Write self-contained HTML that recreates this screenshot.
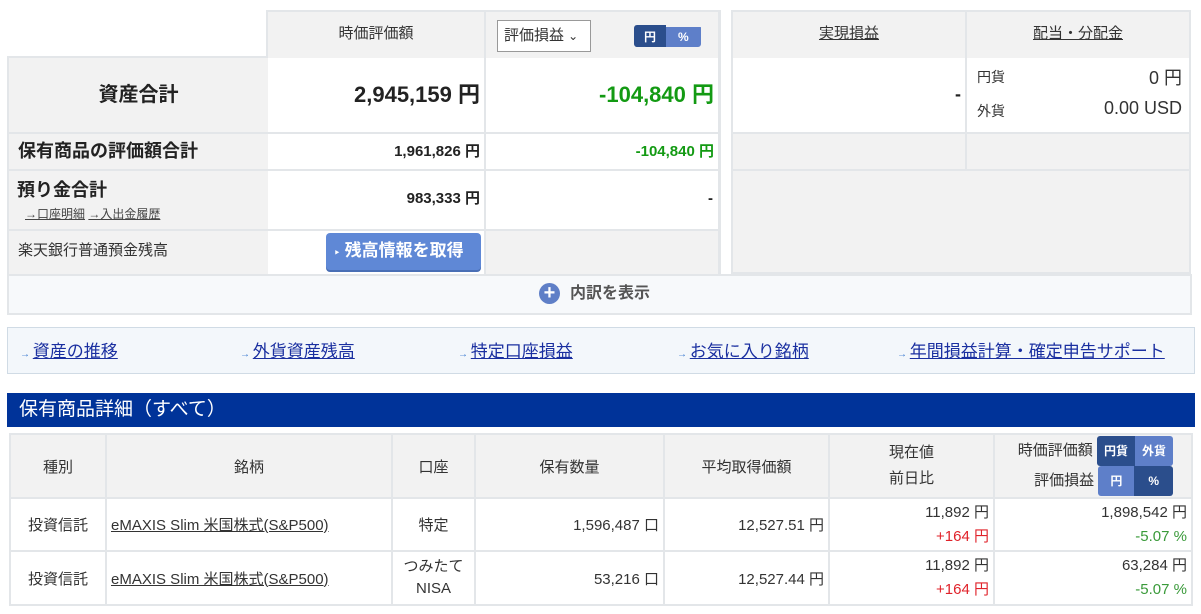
<!DOCTYPE html>
<html><head><meta charset="utf-8"><style>
*{box-sizing:border-box;margin:0;padding:0}
body{width:1201px;height:614px;background:#fff;font-family:"Liberation Sans","Noto Sans CJK JP",sans-serif;color:#333;position:relative;overflow:hidden;font-size:15px}
.a{position:absolute}
.g{background:#f2f2f2}
.w{background:#fff}
.b{font-weight:bold}
.r{text-align:right}
.c{text-align:center}
.grn{color:#139a13}
.red{color:#e0222a}
.pg{color:#3a9a3a}
u{text-decoration:underline}
table{border-collapse:collapse;position:absolute;left:9px;top:433px;width:1184px}
td{border:2px solid #e3e6e9;font-size:15px;padding:0 4px;color:#333}
th{border:2px solid #e3e6e9;background:#f2f2f2;font-weight:normal;font-size:15px;color:#333}
.tg{display:inline-block;font-size:12px;font-weight:bold;color:#fff;border-radius:3px;overflow:hidden;vertical-align:middle}
.tg span{display:inline-block;padding:2px 7px}
</style></head><body>
<div class="a" style="left:266px;top:10px;width:455px;height:264px;background:#e3e6e9"></div>
<div class="a" style="left:7px;top:56px;width:261px;height:218px;background:#e3e6e9"></div>
<div class="a" style="left:731px;top:10px;width:460px;height:264px;background:#e3e6e9"></div>
<div class="a g" style="left:268px;top:12px;width:216px;height:46px;line-height:44px;text-align:center">時価評価額</div>
<div class="a g" style="left:486px;top:12px;width:232px;height:46px"></div>
<div class="a" style="left:497px;top:20px;width:94px;height:32px;border:1px solid #999;background:#fff;line-height:30px;padding-left:6px">評価損益 <span style="font-size:12px">&#8964;</span></div>
<div class="a tg" style="left:634px;top:25px;height:22px"><span style="background:#2b4e8c;padding:3px 10px">円</span><span style="background:#5e7fc9;padding:3px 12px">%</span></div>
<div class="a g b" style="left:9px;top:58px;width:259px;height:74px;line-height:74px;text-align:center;font-size:20px;color:#222">資産合計</div>
<div class="a w b r" style="left:268px;top:58px;width:216px;height:74px;line-height:74px;padding-right:4px;font-size:22px;color:#222">2,945,159 円</div>
<div class="a w b r grn" style="left:486px;top:58px;width:232px;height:74px;line-height:74px;padding-right:4px;font-size:22px">-104,840 円</div>
<div class="a g b" style="left:9px;top:134px;width:259px;height:35px;line-height:35px;padding-left:9px;font-size:18px;color:#222">保有商品の評価額合計</div>
<div class="a w b r" style="left:268px;top:134px;width:216px;height:35px;line-height:35px;padding-right:4px;color:#222">1,961,826 円</div>
<div class="a w b r grn" style="left:486px;top:134px;width:232px;height:35px;line-height:35px;padding-right:4px">-104,840 円</div>
<div class="a g" style="left:9px;top:171px;width:259px;height:58px"></div>
<div class="a b" style="left:17px;top:176px;font-size:18px;color:#222">預り金合計</div>
<div class="a" style="left:25px;top:205px;font-size:12px;color:#444"><u>→口座明細</u> <u>→入出金履歴</u></div>
<div class="a w b r" style="left:268px;top:171px;width:216px;height:58px;line-height:56px;padding-right:4px;color:#222">983,333 円</div>
<div class="a w b r" style="left:486px;top:171px;width:232px;height:58px;line-height:56px;padding-right:5px;color:#222">-</div>
<div class="a g" style="left:9px;top:231px;width:259px;height:43px;line-height:40px;padding-left:9px">楽天銀行普通預金残高</div>
<div class="a w" style="left:268px;top:231px;width:216px;height:43px"></div>
<div class="a" style="left:326px;top:233px;width:155px;height:37px;background:#5f88d6;border-radius:4px;color:#fff;font-weight:bold;font-size:17px;line-height:36px;padding-left:8px;box-shadow:0 2px 0 #4a6fb5"><span style="font-size:10px">&#8227;</span> 残高情報を取得</div>
<div class="a g" style="left:486px;top:231px;width:232px;height:43px"></div>
<div class="a g c" style="left:733px;top:12px;width:232px;height:46px;line-height:44px"><u>実現損益</u></div>
<div class="a g c" style="left:967px;top:12px;width:222px;height:46px;line-height:44px"><u>配当・分配金</u></div>
<div class="a w r b" style="left:733px;top:58px;width:232px;height:74px;line-height:72px;padding-right:4px;font-size:18px;color:#222">-</div>
<div class="a w" style="left:967px;top:58px;width:222px;height:74px"></div>
<div class="a" style="left:977px;top:67px;font-size:14px">円貨</div>
<div class="a" style="left:977px;top:101px;font-size:14px">外貨</div>
<div class="a r" style="left:1040px;top:64px;width:142px;font-size:18px">0 円</div>
<div class="a r" style="left:1040px;top:98px;width:142px;font-size:18px">0.00 USD</div>
<div class="a g" style="left:733px;top:134px;width:232px;height:35px"></div>
<div class="a g" style="left:967px;top:134px;width:222px;height:35px"></div>
<div class="a g" style="left:733px;top:171px;width:456px;height:101px"></div>
<div class="a" style="left:7px;top:274px;width:1185px;height:41px;background:#f7f9fb;border:2px solid #e3e6e9"></div>
<div class="a" style="left:539px;top:283px;width:21px;height:21px;border-radius:50%;background:#5f7fc7;color:#fff;font-weight:bold;font-size:20px;line-height:20px;text-align:center">+</div>
<div class="a b" style="left:570px;top:283px;font-size:16px;line-height:21px;color:#555">内訳を表示</div>
<div class="a" style="left:7px;top:327px;width:1188px;height:47px;background:#f3f7fb;border:1px solid #d0dbe5"></div>
<div class="a" style="left:20px;top:337px;font-size:17px;color:#1a2fa0"><span style="font-size:10px;color:#3a7ad0">→ </span><u>資産の推移</u></div>
<div class="a" style="left:240px;top:337px;font-size:17px;color:#1a2fa0"><span style="font-size:10px;color:#3a7ad0">→ </span><u>外貨資産残高</u></div>
<div class="a" style="left:458px;top:337px;font-size:17px;color:#1a2fa0"><span style="font-size:10px;color:#3a7ad0">→ </span><u>特定口座損益</u></div>
<div class="a" style="left:677px;top:337px;font-size:17px;color:#1a2fa0"><span style="font-size:10px;color:#3a7ad0">→ </span><u>お気に入り銘柄</u></div>
<div class="a" style="left:897px;top:337px;font-size:17px;color:#1a2fa0"><span style="font-size:10px;color:#3a7ad0">→ </span><u>年間損益計算・確定申告サポート</u></div>
<div class="a" style="left:7px;top:393px;width:1188px;height:34px;background:#003399;color:#fff;font-size:19px;line-height:33px;padding-left:12px">保有商品詳細（すべて）</div>
<table>
<tr style="height:64px"><th style="width:96px">種別</th><th style="width:286px">銘柄</th><th style="width:83px">口座</th><th style="width:189px">保有数量</th><th style="width:165px">平均取得価額</th><th style="width:165px;line-height:26px">現在値<br>前日比</th>
<th style="text-align:right;padding-right:18px;line-height:26px">時価評価額 <span class="tg"><span style="background:#2b4e8c">円貨</span><span style="background:#5e7fc9">外貨</span></span><br>評価損益 <span class="tg"><span style="background:#5e7fc9;padding:2px 12px">円</span><span style="background:#2b4e8c;padding:2px 14px">%</span></span></th></tr>
<tr style="height:53px"><td class="c">投資信託</td><td><u>eMAXIS Slim 米国株式(S&amp;P500)</u></td><td class="c">特定</td><td class="r">1,596,487 口</td><td class="r">12,527.51 円</td><td class="r" style="line-height:24px">11,892 円<br><span class="red">+164 円</span></td><td class="r" style="line-height:24px">1,898,542 円<br><span class="pg">-5.07 %</span></td></tr>
<tr style="height:54px"><td class="c">投資信託</td><td><u>eMAXIS Slim 米国株式(S&amp;P500)</u></td><td class="c" style="line-height:22px">つみたて<br>NISA</td><td class="r">53,216 口</td><td class="r">12,527.44 円</td><td class="r" style="line-height:24px">11,892 円<br><span class="red">+164 円</span></td><td class="r" style="line-height:24px">63,284 円<br><span class="pg">-5.07 %</span></td></tr>
</table>
</body></html>
